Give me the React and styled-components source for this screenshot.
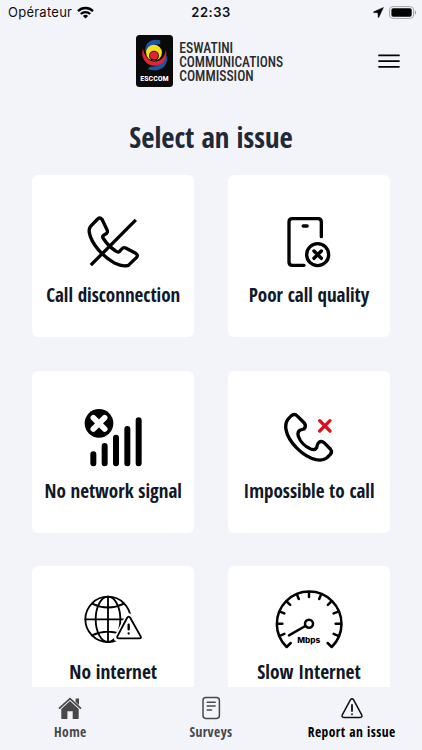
import React from "react";
import styled, { createGlobalStyle } from "styled-components";

const GlobalStyle = createGlobalStyle`
  * {
    box-sizing: border-box;
  }
  body {
    margin: 0;
    background: #f3f4f9;
  }
`;

const Screen = styled.div`
  display: flex;
  flex-direction: column;
  width: 422px;
  height: 750px;
  overflow: hidden;
  background: #f3f4f9;
  font-family: "Open Sans Condensed", "Open Sans", sans-serif;
  font-stretch: 75%;
  font-weight: 700;
`;

const StatusBar = styled.div`
  display: grid;
  grid-template-columns: 1fr auto 1fr;
  align-items: center;
  height: 24px;
  padding: 0 6px 0 8px;
  font-family: Inter, sans-serif;
  font-stretch: 100%;
  font-size: 13px;
  color: #111;
`;

const Carrier = styled.div`
  display: flex;
  align-items: center;
  gap: 5px;
  font-weight: 400;
  letter-spacing: 0.25px;
`;

const Clock = styled.div`
  margin-right: 2px;
  font-weight: 600;
  letter-spacing: 0.5px;
`;

const StatusIcons = styled.div`
  display: flex;
  align-items: center;
  justify-content: flex-end;
  gap: 5px;
`;

const Header = styled.header`
  display: flex;
  align-items: center;
  justify-content: space-between;
  height: 74px;
  padding: 0 22px 0 136px;
`;

const MenuButton = styled.button`
  display: flex;
  padding: 0;
  border: none;
  background: none;
  cursor: pointer;
`;

const Title = styled.h1`
  margin: 18px 0;
  height: 41px;
  font-size: 28.7px;
  line-height: 41px;
  font-weight: 700;
  text-align: center;
  white-space: nowrap;
  color: #1f2937;
`;

const Content = styled.main`
  flex: 1;
  min-height: 0;
  overflow: hidden;
`;

const IssueGrid = styled.div`
  display: grid;
  grid-template-columns: repeat(2, 162.4px);
  grid-auto-rows: 162.2px;
  gap: 33.4px;
  padding-left: 32px;
`;

const IssueCard = styled.div`
  display: flex;
  flex-direction: column;
  background: #fff;
  border-radius: 6px;
  cursor: pointer;
`;

const IssueArt = styled.svg`
  display: block;
  flex: none;
  width: 162px;
  height: ${(props) => props.$height}px;
  fill: none;
  stroke: #000;
  stroke-width: 10;
  stroke-linecap: round;
  stroke-linejoin: round;
`;

const IssueName = styled.div`
  font-size: ${(props) => (props.$large ? "19.4px" : "19.05px")};
  line-height: 28px;
  text-align: center;
  white-space: nowrap;
  color: #111827;
`;

const TabBar = styled.nav`
  display: grid;
  grid-template-columns: repeat(3, 1fr);
  flex: none;
  height: 63px;
  background: #f3f4f9;
`;

const Tab = styled.div`
  display: flex;
  flex-direction: column;
  align-items: center;
  padding-top: 9px;
  font-size: 13.5px;
  line-height: 20px;
  letter-spacing: 0.42px;
  white-space: nowrap;
  color: ${(props) => (props.$active ? "#000" : "#484848")};

  svg {
    display: block;
    margin-bottom: 2px;
  }
`;

const GaugeUnit = styled.text`
  font-family: Inter, sans-serif;
  font-size: 23px;
  font-weight: 800;
  font-stretch: 100%;
  fill: #000;
  stroke: none;
`;

const WifiIcon = () => (
  <svg width="17" height="13" viewBox="0 0 17 13" fill="none" stroke="#000" strokeWidth="2.3">
    <path d="M1 5.1a10.6 10.6 0 0 1 15 0" />
    <path d="M3.8 8a6.7 6.7 0 0 1 9.4 0" />
    <path d="M8.5 12.6 5.9 10a3.7 3.7 0 0 1 5.2 0Z" fill="#000" stroke="none" />
  </svg>
);

const LocationIcon = () => (
  <svg width="11" height="11" viewBox="0 0 12 12">
    <path d="M11.4.5.7 5.3q-.6.5.1.8l4.6.2.2 4.9q.3.7.8 0Z" fill="#000" stroke="#000" strokeWidth=".5" />
  </svg>
);

const BatteryIcon = () => (
  <svg width="27.5" height="13" viewBox="0 0 27.5 13">
    <rect x=".6" y=".6" width="24" height="11.8" rx="3.4" fill="none" stroke="#a5a6aa" />
    <rect x="2.4" y="2.3" width="20.3" height="8.4" rx="1.8" fill="#000" />
    <path d="M25.8 4.4q1.6.7 1.6 2.1t-1.6 2.1Z" fill="#a5a6aa" />
  </svg>
);

const Logo = () => (
  <svg width="156" height="54" viewBox="0 -0.5 156 54">
    <rect x="0" y="0.5" width="37" height="52" rx="3.5" fill="#090909" />
    <path d="M24.2 5.8C14.5 3.4 8.2 8.6 9.6 17.5L11.5 20C11 13 15.5 9.3 24.2 9.9Z" fill="#1c559f" />
    <path d="M11.8 34.6C21.5 38.8 32.6 33.5 31.2 21L28.5 24C26 30 20 32.6 14.2 32.2Z" fill="#1c559f" />
    <path d="M6.8 14C4 25 11.5 31.8 19.5 31.2C27.5 30.6 32 23 29.8 15.5C28.8 23.5 24 27.2 18.3 27C12.5 26.8 8.5 21.5 6.8 14Z" fill="#df2632" />
    <circle cx="18" cy="18.2" r="7.9" fill="#f6df1b" />
    <circle cx="18" cy="21.2" r="4.9" fill="#090909" />
    <circle cx="18" cy="21" r="4.1" fill="#e1242f" />
    <text x="4.3" y="46.2" textLength="28.4" lengthAdjust="spacingAndGlyphs" fontFamily="Roboto, sans-serif" fontWeight="700" fontSize="7.8" fill="#fff">
      ESCCOM
    </text>
    <g fontFamily="Roboto, sans-serif" fontWeight="500" fontSize="13.8" fill="#2b2b2d">
      <text x="43.2" y="18.1" textLength="54" lengthAdjust="spacingAndGlyphs">ESWATINI</text>
      <text x="43.2" y="32.3" textLength="104" lengthAdjust="spacingAndGlyphs">COMMUNICATIONS</text>
      <text x="43.2" y="46.5" textLength="74.5" lengthAdjust="spacingAndGlyphs">COMMISSION</text>
    </g>
  </svg>
);

const MenuIcon = () => (
  <svg width="22" height="14" viewBox="0 0 22 14" stroke="#000" strokeWidth="1.7" strokeLinecap="round">
    <path d="M1 1.4h20M1 7.1h20M1 12.8h20" />
  </svg>
);

const CallDisconnectionArt = () => (
  <IssueArt $height={106} viewBox="36 194 486 318">
    <path d="M233 326L211 349Q206 356 208 367C214 401 248 438 285 459Q308 470 325 465L350 441Q355 434 347 429L317 413Q310 410 305 416L298 424Q294 427 287 422C275 414 258 397 249 383Q246 377 252 374L260 369Q264 365 261 358L246 327Q240 320 233 326Z" />
    <path d="M216 461L344 332" strokeLinecap="square" />
  </IssueArt>
);

const PoorQualityArt = () => (
  <IssueArt $height={106} viewBox="24 194 486 318">
    <path d="M304 379V335Q304 325 294 325H217Q207 325 207 335V455Q207 465 217 465H252" />
    <path d="M250 347h11" strokeWidth="11" />
    <circle cx="293" cy="433" r="33" />
    <path d="M282 422l22 22M304 422l-22 22" strokeWidth="10.5" />
  </IssueArt>
);

const NoSignalArt = () => (
  <IssueArt $height={106} viewBox="36 32 486 318">
    <circle cx="237" cy="189" r="43" fill="#000" stroke="none" />
    <path d="M220 172l34 34M254 172l-34 34" stroke="#fff" strokeWidth="17" />
    <path d="M220 282V309M254 257V309M288 232V309M322 206V309M356 180V309" strokeWidth="18" />
  </IssueArt>
);

const ImpossibleCallArt = () => (
  <IssueArt $height={106} viewBox="24 32 486 318">
    <path d="M213 167L203 178Q195 189 198 208C205 245 248 289 288 298Q308 302 320 293L331 282Q338 274 331 266L312 247Q303 239 295 248Q291 253 290 262Q285 271 272 266C255 259 240 243 235 228Q231 214 241 209L252 206Q260 198 253 188L233 168Q223 158 213 167Z" />
    <path d="M299 181l31 31M330 181l-31 31" stroke="#dc101c" />
  </IssueArt>
);

const NoInternetArt = () => (
  <IssueArt $height={92} viewBox="36 18 486 276">
    <g strokeWidth="5.5">
      <circle cx="264" cy="178" r="68" />
      <ellipse cx="264" cy="178" rx="37" ry="68" />
      <path d="M264 110V246M196 178H332M216 131Q264 154 312 131M216 226Q264 204 312 226" />
      <path d="M326 170L292 234H363Z" stroke="#fff" strokeWidth="20" fill="#fff" />
      <path d="M321 174L292 229Q290 235 297 235H358Q365 235 362 229L331 174Q326 166 321 174Z" fill="#fff" />
      <path d="M326 194V208M326 220V220.5" strokeWidth="7" />
    </g>
  </IssueArt>
);

const gaugeTicks = [-112.5, -90, -67.5, -45, -22.5, 0, 22.5, 45, 67.5, 90, 112.5];

const SlowInternetArt = () => (
  <IssueArt $height={92} viewBox="24 18 486 276">
    <g strokeWidth="7.5">
      <path d="M212 249L200 261A97 97 0 1 1 335 261L323 249" />
      {gaugeTicks.map((angle) => (
        <path key={angle} d="M267 96V111" transform={`rotate(${angle} 267 191)`} />
      ))}
      <circle cx="267" cy="191" r="12" />
      <path d="M207 226L256 198" />
    </g>
    <GaugeUnit x="232" y="248" textLength="69" lengthAdjust="spacingAndGlyphs">
      Mbps
    </GaugeUnit>
  </IssueArt>
);

const HomeIcon = () => (
  <svg width="24" height="24" viewBox="0 0 24 24" fill="#484848">
    <path d="M12 1.4 23.6 12l-1.2 1.3L12 3.8 1.6 13.3.4 12Z" />
    <path d="M17.6 2.4h3.4v6.5l-3.4-3.1Z" />
    <path d="M12 5.1 20.7 13v9.2q0 .8-.8.8h-5.2v-7.7H9.4V23H4.1q-.8 0-.8-.8V13Z" />
  </svg>
);

const SurveyIcon = () => (
  <svg width="24" height="24" viewBox="0 0 24 24" fill="none" stroke="#484848" strokeWidth="1.5" strokeLinecap="round">
    <rect x="4" y="1.6" width="16.4" height="20.8" rx="2.8" />
    <path d="M8.2 6.2h8M8.2 10.1h8M8.2 14h4.3" />
  </svg>
);

const WarningIcon = () => (
  <svg width="24" height="24" viewBox="0 0 24 24" fill="none" stroke="#111" strokeWidth="1.5" strokeLinecap="round" strokeLinejoin="round">
    <path d="M10.5 3.7 2.3 18.8Q1.3 21.3 3.8 21.5H20.2Q22.7 21.3 21.7 18.8L13.5 3.7Q12 1.6 10.5 3.7Z" />
    <path d="M12 9v6M12 18.2v.1" strokeWidth="1.8" />
  </svg>
);

const issues = [
  { name: "Call disconnection", Art: CallDisconnectionArt },
  { name: "Poor call quality", Art: PoorQualityArt },
  { name: "No network signal", Art: NoSignalArt },
  { name: "Impossible to call", Art: ImpossibleCallArt },
  { name: "No internet", Art: NoInternetArt, large: true },
  { name: "Slow Internet", Art: SlowInternetArt, large: true },
];

const tabs = [
  { name: "Home", Icon: HomeIcon },
  { name: "Surveys", Icon: SurveyIcon },
  { name: "Report an issue", Icon: WarningIcon, active: true },
];

const App = () => {
  return (
    <Screen>
      <GlobalStyle />
      <StatusBar>
        <Carrier>
          Opérateur
          <WifiIcon />
        </Carrier>
        <Clock>22:33</Clock>
        <StatusIcons>
          <LocationIcon />
          <BatteryIcon />
        </StatusIcons>
      </StatusBar>

      <Header>
        <Logo />
        <MenuButton aria-label="Menu">
          <MenuIcon />
        </MenuButton>
      </Header>

      <Content>
        <Title>Select an issue</Title>
        <IssueGrid>
          {issues.map(({ name, Art, large }) => (
            <IssueCard key={name}>
              <Art />
              <IssueName $large={large}>{name}</IssueName>
            </IssueCard>
          ))}
        </IssueGrid>
      </Content>

      <TabBar>
        {tabs.map(({ name, Icon, active }) => (
          <Tab key={name} $active={active}>
            <Icon />
            {name}
          </Tab>
        ))}
      </TabBar>
    </Screen>
  );
};

export default App;
